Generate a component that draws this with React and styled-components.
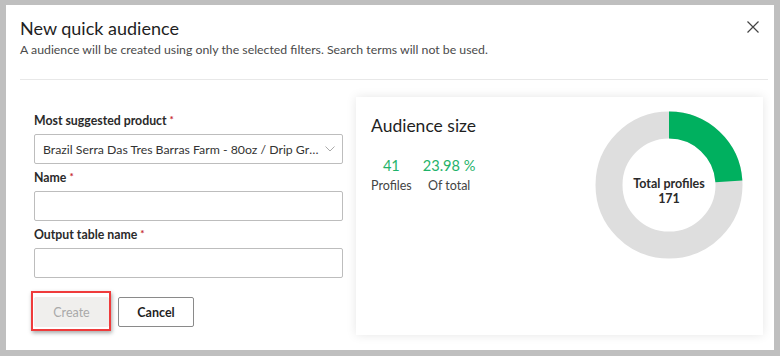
import React from "react";
import styled, { createGlobalStyle } from "styled-components";

const Global = createGlobalStyle`
  html, body { margin: 0; padding: 0; }
  body {
    background: #bfbfbf;
    font-family: Lato, "Noto Sans", sans-serif;
    color: #222;
  }
`;

const Frame = styled.div`
  padding: 5px 6px 6px 6px;
  width: 780px;
  height: 356px;
  box-sizing: border-box;
`;

const Dialog = styled.div`
  background: #fff;
  width: 768px;
  height: 345px;
  display: flex;
  flex-direction: column;
  box-sizing: border-box;
`;

const Header = styled.header`
  padding: 11px 15px 0 14px;
`;

const TitleRow = styled.div`
  display: flex;
  justify-content: space-between;
  align-items: flex-start;
`;

const Title = styled.h1`
  margin: 0;
  font-size: 18px;
  line-height: 24px;
  font-weight: 400;
  color: #1f1f1f;
`;

const CloseButton = styled.button`
  border: 0;
  background: none;
  padding: 0;
  margin: 5px 0 0 0;
  width: 12px;
  height: 12px;
  display: flex;
  cursor: pointer;
`;

const Caption = styled.p`
  margin: 1px 0 0 0;
  font-size: 12.3px;
  line-height: 18px;
  color: #4a4a4a;
`;

const Divider = styled.hr`
  border: 0;
  border-top: 1px solid #e8e8e8;
  margin: 20px 0 0 14px;
  width: 748px;
`;

const Body = styled.div`
  display: flex;
  gap: 13px;
  padding: 17px 0 0 28px;
`;

const Form = styled.form`
  width: 309px;
  display: flex;
  flex-direction: column;
  gap: 6px;
  padding-top: 16px;
`;

const Label = styled.label`
  display: block;
  font-size: 12.3px;
  line-height: 16px;
  height: 16px;
  font-weight: 700;
  color: #2a2a2a;
  margin-bottom: 5px;
`;

const Req = styled.span`
  color: #c4282d;
  font-size: 10px;
  line-height: 0;
  margin-left: 3px;
  vertical-align: 2px;
`;

const Box = styled.div`
  height: 30px;
  box-sizing: border-box;
  border: 1px solid #bdbdbd;
  border-radius: 2px;
  background: #fff;
  display: flex;
  align-items: center;
  padding: 0 7px 0 8px;
  font-size: 12.3px;
  color: #333;
`;

const SelectText = styled.span`
  width: 276px;
  white-space: nowrap;
  overflow: hidden;
  text-overflow: ellipsis;
  margin-right: auto;
`;

const Input = styled.input`
  display: block;
  height: 30px;
  box-sizing: border-box;
  border: 1px solid #bdbdbd;
  border-radius: 2px;
  width: 100%;
  outline: none;
  font: inherit;
`;

const Actions = styled.div`
  display: flex;
  gap: 8px;
  margin-top: 13px;
`;

const Highlight = styled.div`
  margin: -6px -1px -4px -3px;
  padding: 4px 0 2px 1px;
  border: 2px solid #ef3b3b;
  box-shadow: 1px 2px 4px rgba(0,0,0,0.35);
  display: flex;
`;

const Button = styled.button`
  height: 30px;
  box-sizing: border-box;
  width: ${p => p.$w}px;
  padding: 0;
  border-radius: 2px;
  font-family: inherit;
  font-size: 12.5px;
  font-weight: ${p => (p.$disabled ? 400 : 700)};
  background: ${p => (p.$disabled ? "#f0efed" : "#fff")};
  color: ${p => (p.$disabled ? "#a9a9a9" : "#1f1f1f")};
  border: 1px solid ${p => (p.$disabled ? "#f0efed" : "#8a8a8a")};
`;

const Card = styled.section`
  width: 407px;
  height: 238px;
  box-sizing: border-box;
  background: #fff;
  box-shadow: 0 0 10px rgba(0,0,0,0.1);
  display: flex;
  justify-content: space-between;
  padding: 18px 20px 0 15px;
`;

const Stats = styled.div`
  display: flex;
  flex-direction: column;
`;

const CardTitle = styled.h2`
  margin: 0;
  font-size: 17.5px;
  line-height: 22px;
  font-weight: 400;
  color: #1f1f1f;
`;

const StatRow = styled.div`
  display: flex;
  gap: 11px;
  margin-top: 19px;
`;

const Stat = styled.div`
  display: flex;
  flex-direction: column;
  align-items: center;
`;

const StatValue = styled.span`
  font-size: 14.6px;
  line-height: 20px;
  color: #1fb36a;
`;

const StatLabel = styled.span`
  font-size: 12.5px;
  line-height: 18px;
  color: #444;
  margin-top: 1px;
`;

const Chart = styled.div`
  position: relative;
  width: 148px;
  height: 148px;
  margin-top: -4px;
`;

const Center = styled.div`
  position: absolute;
  inset: 0;
  display: flex;
  flex-direction: column;
  align-items: center;
  justify-content: center;
  font-size: 12.5px;
  line-height: 15px;
  font-weight: 700;
  color: #2a2a2a;
  padding-top: 11px;
`;

function Donut({ value, total }) {
  const r = 60;
  const c = 2 * Math.PI * r;
  const frac = value / total;
  return (
    <Chart>
      <svg width="148" height="148" viewBox="0 0 148 148">
        <circle cx="74" cy="74" r={r} fill="none" stroke="#dedede" strokeWidth="27" />
        <circle
          cx="74"
          cy="74"
          r={r}
          fill="none"
          stroke="#00b05f"
          strokeWidth="27"
          strokeDasharray={`${c * frac} ${c}`}
          transform="rotate(-90 74 74)"
        />
      </svg>
      <Center>
        <span>Total profiles</span>
        <span>{total}</span>
      </Center>
    </Chart>
  );
}

export default function App() {
  return (
    <>
      <Global />
      <Frame>
        <Dialog>
          <Header>
            <TitleRow>
              <Title>New quick audience</Title>
              <CloseButton aria-label="Close">
                <svg width="12" height="12" viewBox="0 0 12 12">
                  <path d="M0.5 0.5L11.5 11.5M11.5 0.5L0.5 11.5" stroke="#444" strokeWidth="1.2" />
                </svg>
              </CloseButton>
            </TitleRow>
            <Caption>A audience will be created using only the selected filters. Search terms will not be used.</Caption>
          </Header>
          <Divider />
          <Body>
            <Form>
              <div>
                <Label>Most suggested product<Req>*</Req></Label>
                <Box>
                  <SelectText>Brazil Serra Das Tres Barras Farm - 80oz / Drip Grind</SelectText>
                  <svg width="10" height="6" viewBox="0 0 10 6">
                    <path d="M0.5 0.5L5 5L9.5 0.5" fill="none" stroke="#aaa" strokeWidth="1" />
                  </svg>
                </Box>
              </div>
              <div>
                <Label>Name<Req>*</Req></Label>
                <Input />
              </div>
              <div>
                <Label>Output table name<Req>*</Req></Label>
                <Input />
              </div>
              <Actions>
                <Highlight>
                  <Button type="button" $disabled $w={75}>Create</Button>
                </Highlight>
                <Button type="button" $w={76}>Cancel</Button>
              </Actions>
            </Form>
            <Card>
              <Stats>
                <CardTitle>Audience size</CardTitle>
                <StatRow>
                  <Stat>
                    <StatValue>41</StatValue>
                    <StatLabel>Profiles</StatLabel>
                  </Stat>
                  <Stat>
                    <StatValue>23.98 %</StatValue>
                    <StatLabel>Of total</StatLabel>
                  </Stat>
                </StatRow>
              </Stats>
              <Donut value={41} total={171} />
            </Card>
          </Body>
        </Dialog>
      </Frame>
    </>
  );
}
